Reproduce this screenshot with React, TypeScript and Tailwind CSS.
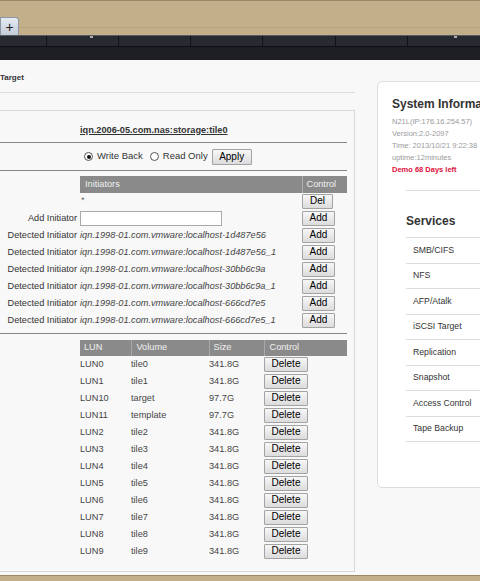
import React from 'react';

const Btn = ({ children, w, h = 15 }: { children: React.ReactNode; w: string; h?: number }) => (
  <button
    className={`${w} ${h === 16 ? 'h-[16px]' : 'h-[15px]'} p-0 text-[10px] leading-none text-black bg-linear-to-b from-[#f7f7f7] to-[#dcdcdc] border border-[#a3a3a3] rounded-[1px] font-['Liberation_Sans',Arial,sans-serif]`}
  >
    {children}
  </button>
);

const detected = [
  'iqn.1998-01.com.vmware:localhost-1d487e56',
  'iqn.1998-01.com.vmware:localhost-1d487e56_1',
  'iqn.1998-01.com.vmware:localhost-30bb6c9a',
  'iqn.1998-01.com.vmware:localhost-30bb6c9a_1',
  'iqn.1998-01.com.vmware:localhost-666cd7e5',
  'iqn.1998-01.com.vmware:localhost-666cd7e5_1',
];

const luns: [string, string, string][] = [
  ['LUN0', 'tile0', '341.8G'],
  ['LUN1', 'tile1', '341.8G'],
  ['LUN10', 'target', '97.7G'],
  ['LUN11', 'template', '97.7G'],
  ['LUN2', 'tile2', '341.8G'],
  ['LUN3', 'tile3', '341.8G'],
  ['LUN4', 'tile4', '341.8G'],
  ['LUN5', 'tile5', '341.8G'],
  ['LUN6', 'tile6', '341.8G'],
  ['LUN7', 'tile7', '341.8G'],
  ['LUN8', 'tile8', '341.8G'],
  ['LUN9', 'tile9', '341.8G'],
];

const services = ['SMB/CIFS', 'NFS', 'AFP/Atalk', 'iSCSI Target', 'Replication', 'Snapshot', 'Access Control', 'Tape Backup'];

export default function App() {
  return (
    <div className="w-[480px] h-[581px] overflow-hidden bg-[#f8f8f8] font-['Liberation_Sans',Arial,sans-serif] text-[#333]">
      {/* browser tab strip */}
      <div className="h-[35px] bg-[#c3b08b] border-t border-[#9a8866] relative flex items-end">
        <div className="absolute left-0 right-0 top-[26px] border-t border-dotted border-[#b09d78]" />
        <div className="relative w-[19px] h-[18px] bg-linear-to-b from-[#e6ebf2] to-[#c3cbd7] border border-b-0 border-[#8d96a4] rounded-tr-[3px] flex items-center justify-center text-[14px] leading-none text-[#222]">
          +
        </div>
      </div>
      {/* dark nav */}
      <div className="relative h-[11px] bg-[#272a31] border-t border-[#575b63] flex">
        <div className="w-[49px] border-r border-[#111216]" />
        <div className="w-[76px] border-r border-[#111216]" />
        <div className="w-[76px] border-r border-[#111216]" />
        <div className="w-[76px] border-r border-[#111216]" />
        <div className="w-[76px] border-r border-[#111216]" />
        <div className="w-[76px] border-r border-[#111216]" />
        <div className="w-[76px]" />
        <div className="absolute left-[90px] top-0 w-[3px] h-[2px] bg-[#b8a8b0]" />
        <div className="absolute left-[454px] top-0 w-[3px] h-[2px] bg-[#b8a8b0]" />
      </div>
      <div className="h-px bg-[#0e0f12]" />
      <div className="h-[13px] bg-[#1d1f25]" />

      {/* main */}
      <div className="h-[515px] flex">
        {/* left column */}
        <div className="w-[355px] shrink-0">
          <div className="h-[33px] pt-[12px] leading-[12px] text-[8px] font-bold text-[#333] border-b border-[#dddddd]">
            Target
          </div>
          <div className="mt-[17px] w-[355px] border border-l-0 border-[#d8d8d8] pr-[7px] pb-[11px] text-[9.2px]">
            <div className="h-[32px] pl-[80px] pt-[13px] leading-[12px] border-b border-[#858585]">
              <span className="font-bold underline text-[#333]">iqn.2006-05.com.nas:storage:tile0</span>
            </div>
            <div className="h-[28px] pl-[80px] flex items-center border-b border-[#858585] text-[9.5px]">
              <span className="ml-[4px] w-[9px] h-[9px] rounded-full border border-[#555] bg-white flex items-center justify-center">
                <span className="w-[4px] h-[4px] rounded-full bg-[#111]" />
              </span>
              <span className="ml-[4px]">Write Back</span>
              <span className="ml-[7px] w-[9px] h-[9px] rounded-full border border-[#555] bg-white" />
              <span className="ml-[4px]">Read Only</span>
              <span className="ml-[4px]">
                <Btn w="w-[40px]" h={16}>Apply</Btn>
              </span>
            </div>

            <table className="mt-[5px] table-fixed border-collapse w-[347px]">
              <colgroup>
                <col className="w-[80px]" />
                <col className="w-[222px]" />
                <col className="w-[45px]" />
              </colgroup>
              <thead>
                <tr className="h-[17px]">
                  <th className="p-0" />
                  <th className="p-0 pl-[5px] bg-[#8a8a8a] text-[#f0f0f0] font-normal text-left">Initiators</th>
                  <th className="p-0 pl-[4px] bg-[#8a8a8a] text-[#f0f0f0] font-normal text-left border-l border-[#b0b0b0]">Control</th>
                </tr>
              </thead>
              <tbody>
                <tr className="h-[17px]">
                  <td className="p-0" />
                  <td className="p-0 align-top text-[#666] leading-[10px] pl-[1px] pt-[2px]">*</td>
                  <td className="p-0 align-middle">
                    <Btn w="w-[31px]">Del</Btn>
                  </td>
                </tr>
                <tr className="h-[17px]">
                  <td className="p-0 pr-[3px] text-right whitespace-nowrap">Add Initiator</td>
                  <td className="p-0 align-middle">
                    <div className="w-[142px] h-[15px] border border-[#a8a8a8] bg-white" />
                  </td>
                  <td className="p-0 align-middle">
                    <Btn w="w-[33px]">Add</Btn>
                  </td>
                </tr>
                {detected.map((d) => (
                  <tr key={d} className="h-[17px]">
                    <td className="p-0 pr-[3px] text-right whitespace-nowrap">Detected Initiator</td>
                    <td className="p-0 italic whitespace-nowrap text-[#444]">{d}</td>
                    <td className="p-0 align-middle">
                      <Btn w="w-[33px]">Add</Btn>
                    </td>
                  </tr>
                ))}
              </tbody>
            </table>

            <div className="mt-[4px] h-px bg-[#858585]" />

            <table className="mt-[6px] table-fixed border-collapse w-[347px]">
              <colgroup>
                <col className="w-[80px]" />
                <col className="w-[51px]" />
                <col className="w-[78px]" />
                <col className="w-[55px]" />
                <col className="w-[83px]" />
              </colgroup>
              <thead>
                <tr className="h-[16px]">
                  <th className="p-0" />
                  <th className="p-0 pl-[4px] bg-[#8a8a8a] text-[#f0f0f0] font-normal text-left">LUN</th>
                  <th className="p-0 pl-[5px] bg-[#8a8a8a] text-[#f0f0f0] font-normal text-left border-l border-[#a8a8a8]">Volume</th>
                  <th className="p-0 pl-[4px] bg-[#8a8a8a] text-[#f0f0f0] font-normal text-left border-l border-[#a8a8a8]">Size</th>
                  <th className="p-0 pl-[5px] bg-[#8a8a8a] text-[#f0f0f0] font-normal text-left border-l border-[#a8a8a8]">Control</th>
                </tr>
              </thead>
              <tbody>
                {luns.map(([l, v, s]) => (
                  <tr key={l} className="h-[17px]">
                    <td className="p-0" />
                    <td className="p-0 text-[#444]">{l}</td>
                    <td className="p-0 text-[#444]">{v}</td>
                    <td className="p-0 text-[#444]">{s}</td>
                    <td className="p-0 align-middle">
                      <Btn w="w-[44px]">Delete</Btn>
                    </td>
                  </tr>
                ))}
              </tbody>
            </table>
          </div>
        </div>

        {/* right column */}
        <div className="ml-[22px] pt-[21px] shrink-0">
          <div className="w-[240px] h-[407px] bg-white border border-[#dddddd] rounded-[5px] pt-[15px] pl-[14px]">
            <div className="text-[12px] leading-[14px] font-bold text-[#333] whitespace-nowrap">System Information</div>
            <div className="mt-[5px] text-[7.5px] leading-[12px] text-[#9a9a9a] whitespace-nowrap">
              <div>N21L(IP:176.16.254.57)</div>
              <div>Version:2.0-2097</div>
              <div>Time: 2013/10/21 9:22:38</div>
              <div>uptime:12minutes</div>
              <div className="font-bold text-[#e0103c]">Demo 68 Days left</div>
            </div>
            <div className="mt-[14px] ml-[14px] border-t border-[#dddddd]">
              <div className="h-[47px] pt-[23px] leading-[14px] text-[12px] font-bold text-[#333] border-b border-[#dddddd]">
                Services
              </div>
              {services.map((s) => (
                <div key={s} className="h-[25.5px] pl-[7px] flex items-center text-[8.7px] text-[#333] border-b border-[#dddddd]">
                  {s}
                </div>
              ))}
            </div>
          </div>
        </div>
      </div>

      {/* bottom strip */}
      <div className="h-[6px] bg-[#c3b08b] border-t border-[#9a8866]" />
    </div>
  );
}
